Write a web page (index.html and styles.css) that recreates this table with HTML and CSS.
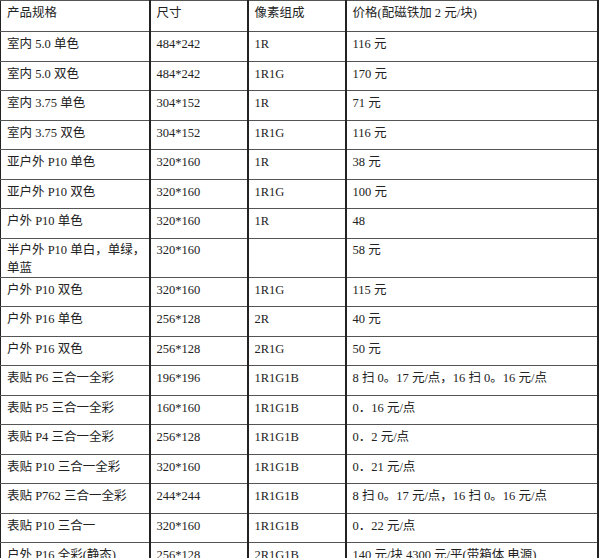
FILE: index.html
```html
<!DOCTYPE html>
<html lang="zh">
<head>
<meta charset="utf-8">
<link rel="stylesheet" href="styles.css">
</head>
<body>
<table class="spec">
  <colgroup>
    <col class="c1"><col class="c2"><col class="c3"><col class="c4">
  </colgroup>
  <tr class="head"><td>产品规格</td><td>尺寸</td><td>像素组成</td><td>价格(配磁铁加 2 元/块)</td></tr>
  <tr><td>室内 5.0 单色</td><td>484*242</td><td>1R</td><td>116 元</td></tr>
  <tr><td>室内 5.0 双色</td><td>484*242</td><td>1R1G</td><td>170 元</td></tr>
  <tr><td>室内 3.75 单色</td><td>304*152</td><td>1R</td><td>71 元</td></tr>
  <tr><td>室内 3.75 双色</td><td>304*152</td><td>1R1G</td><td>116 元</td></tr>
  <tr><td>亚户外 P10 单色</td><td>320*160</td><td>1R</td><td>38 元</td></tr>
  <tr><td>亚户外 P10 双色</td><td>320*160</td><td>1R1G</td><td>100 元</td></tr>
  <tr><td>户外 P10 单色</td><td>320*160</td><td>1R</td><td>48</td></tr>
  <tr class="tall"><td>半户外 P10 单白，单绿，单蓝</td><td>320*160</td><td></td><td>58 元</td></tr>
  <tr><td>户外 P10 双色</td><td>320*160</td><td>1R1G</td><td>115 元</td></tr>
  <tr><td>户外 P16 单色</td><td>256*128</td><td>2R</td><td>40 元</td></tr>
  <tr><td>户外 P16 双色</td><td>256*128</td><td>2R1G</td><td>50 元</td></tr>
  <tr><td>表贴 P6 三合一全彩</td><td>196*196</td><td>1R1G1B</td><td>8 扫 0。17 元/点，16 扫 0。16 元/点</td></tr>
  <tr><td>表贴 P5 三合一全彩</td><td>160*160</td><td>1R1G1B</td><td>0．16 元/点</td></tr>
  <tr><td>表贴 P4 三合一全彩</td><td>256*128</td><td>1R1G1B</td><td>0．2 元/点</td></tr>
  <tr><td>表贴 P10 三合一全彩</td><td>320*160</td><td>1R1G1B</td><td>0．21 元/点</td></tr>
  <tr><td>表贴 P762 三合一全彩</td><td>244*244</td><td>1R1G1B</td><td>8 扫 0。17 元/点，16 扫 0。16 元/点</td></tr>
  <tr><td>表贴 P10 三合一</td><td>320*160</td><td>1R1G1B</td><td>0．22 元/点</td></tr>
  <tr><td>户外 P16 全彩(静态)</td><td>256*128</td><td>2R1G1B</td><td>140 元/块 4300 元/平(带箱体 电源)</td></tr>
</table>
</body>
</html>
```

FILE: styles.css
```css
html, body {
  margin: 0;
  padding: 0;
  background: #fff;
}

.spec {
  border-collapse: collapse;
  table-layout: fixed;
  width: 597px;
  font-family: "Liberation Serif", "Noto Sans CJK SC", serif;
  font-size: 12.5px;
  color: #222;
  border-left: 1px solid #222;
  border-right: 2px solid #1a1a1a;
  border-top: 1px solid #333;
}

.c1 { width: 149px; }
.c2 { width: 98px; }
.c3 { width: 98px; }
.c4 { width: 252px; }

.spec td {
  border-top: 1px solid #555;
  border-bottom: 1px solid #555;
  border-left: 2px solid #222;
  border-right: 2px solid #222;
  height: 29.5px;
  padding: 3px 2px 0 6px;
  line-height: 18px;
  vertical-align: top;
  box-sizing: border-box;
  white-space: normal;
}

.spec td:first-child {
  border-left: 1px solid #222;
}

.spec .head td {
  height: 31px;
}

.spec .tall td {
  height: 39px;
  padding-top: 2px;
}
```
